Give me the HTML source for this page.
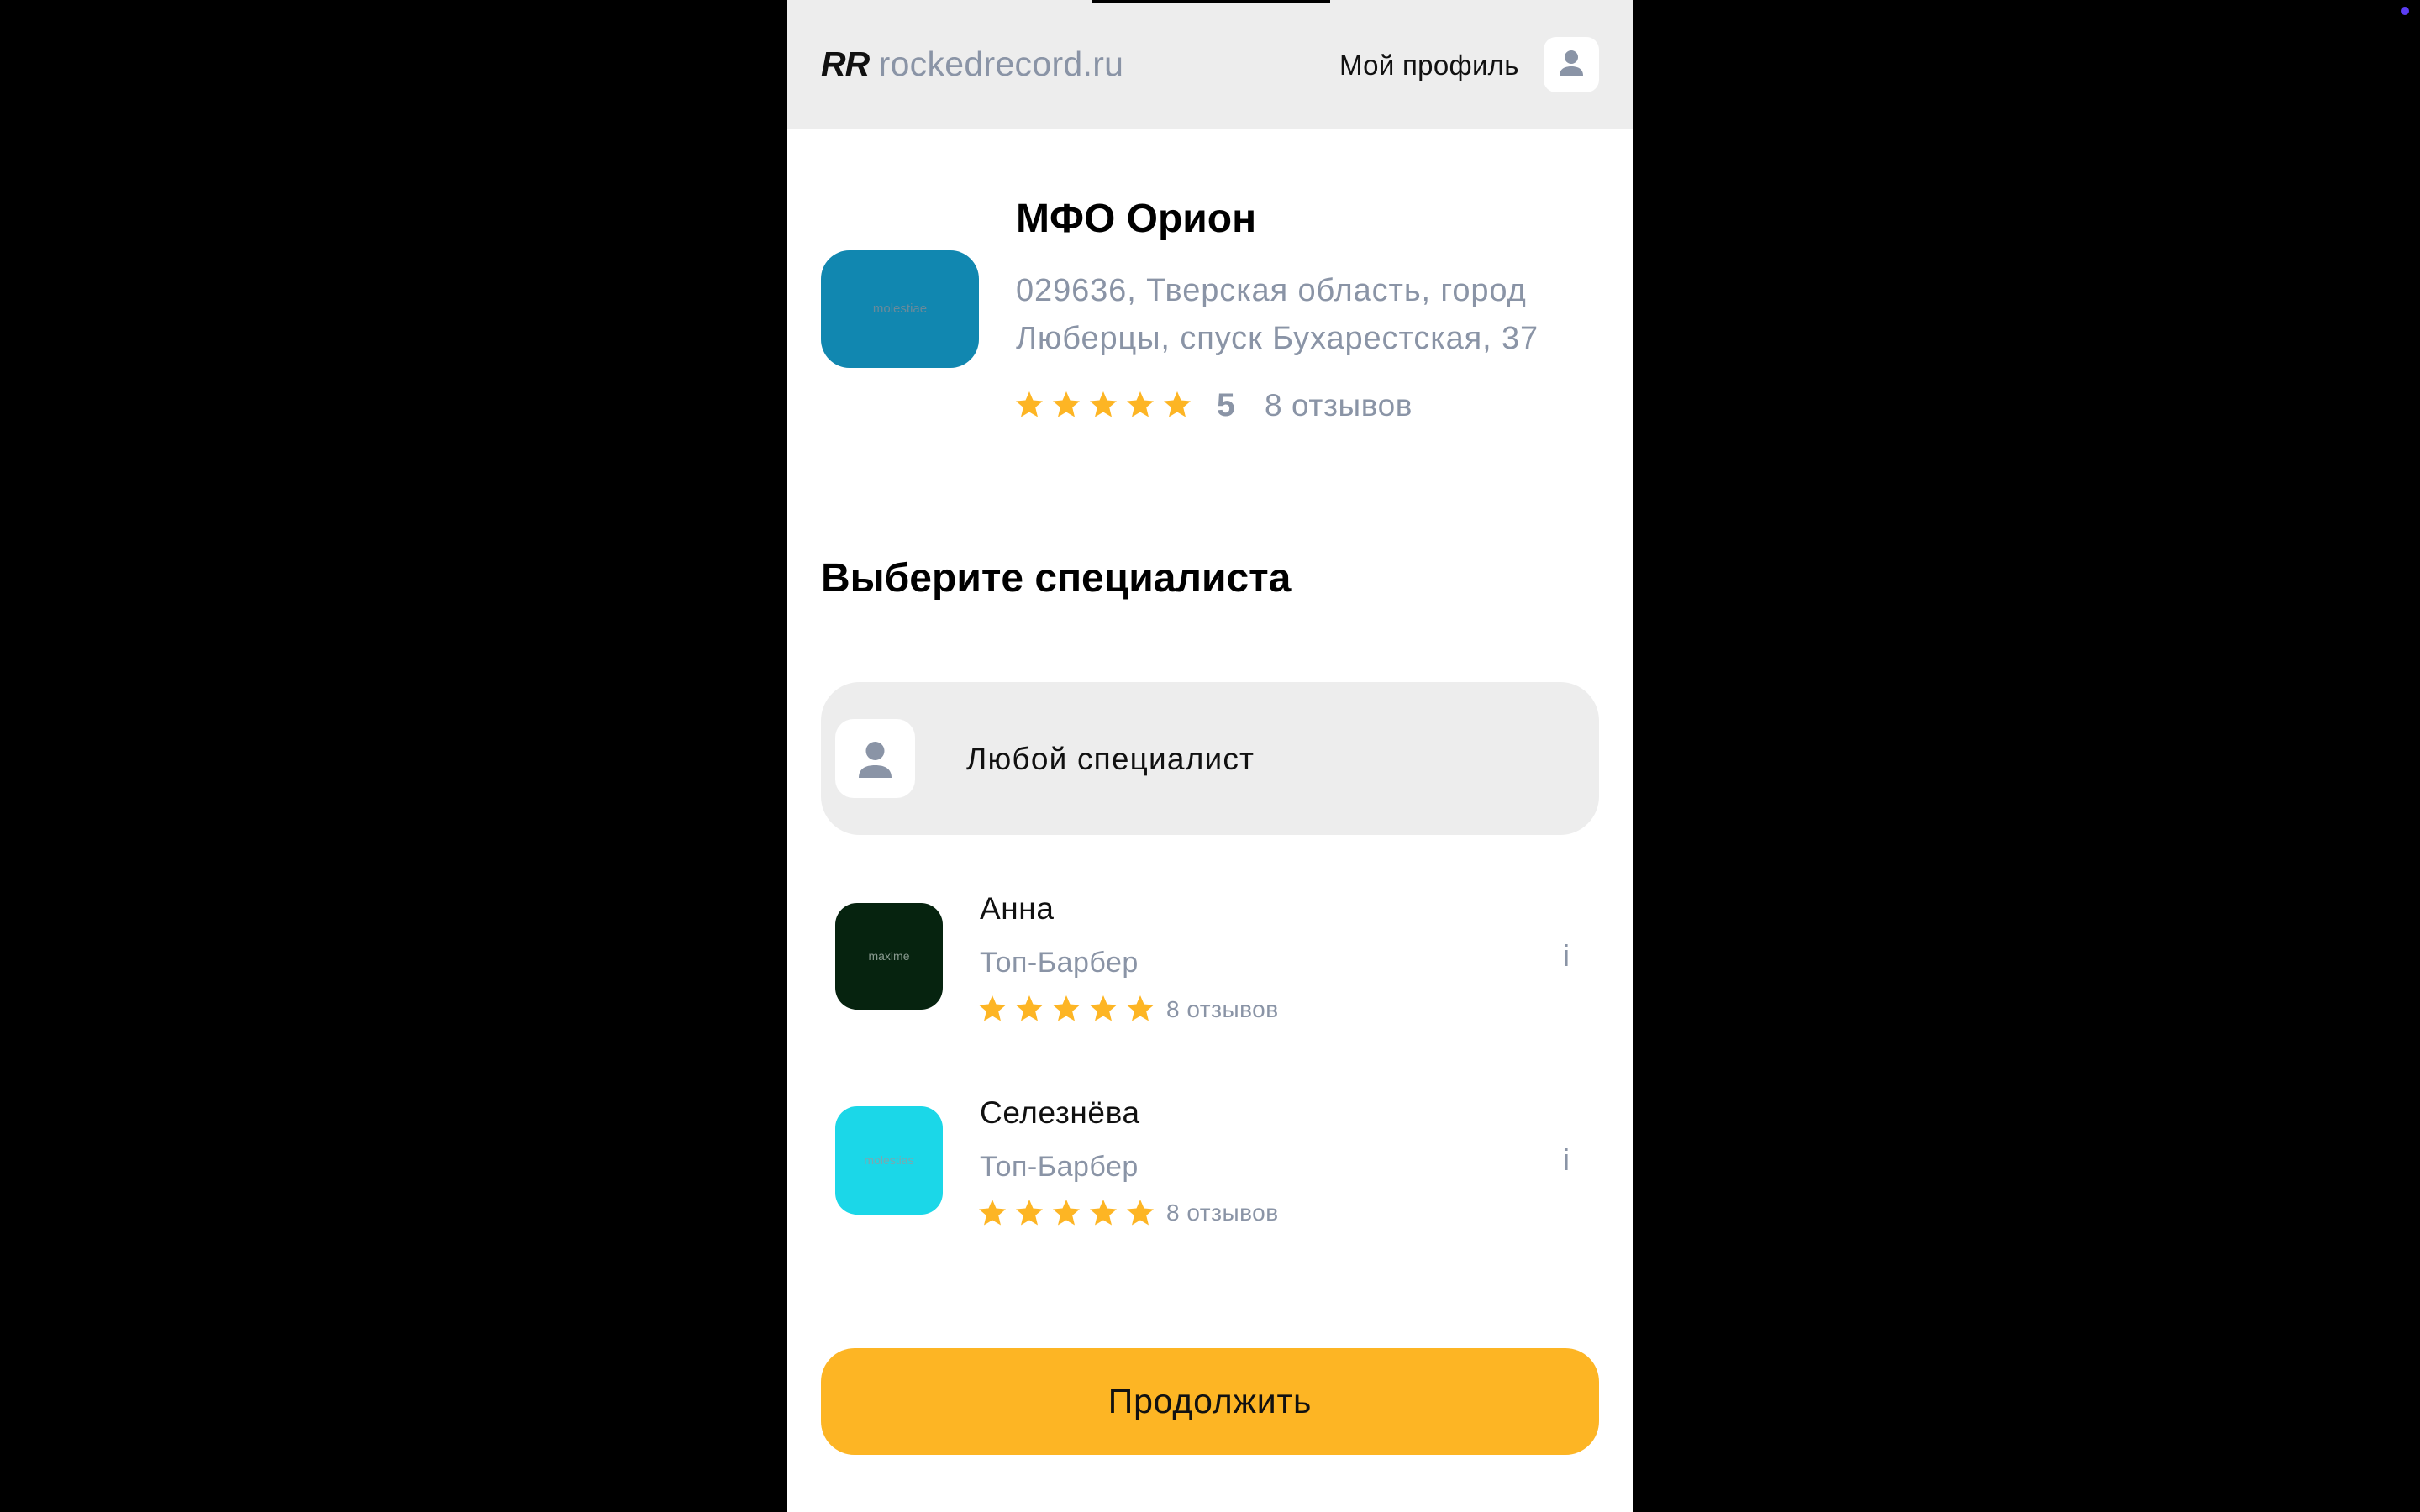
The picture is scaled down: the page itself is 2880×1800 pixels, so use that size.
<!DOCTYPE html>
<html><head><meta charset="utf-8"><style>
*{margin:0;padding:0;box-sizing:border-box}
body{width:2880px;height:1800px;background:#000;position:relative;overflow:hidden;font-family:"Liberation Sans","DejaVu Sans",sans-serif}
.a{position:absolute;white-space:nowrap}
.panel{position:absolute;left:937px;top:0;width:1006px;height:1800px;background:#fff}
.hdr{position:absolute;left:937px;top:0;width:1006px;height:154px;background:#ededed}
.g{color:#8a94a6}
</style></head><body>
<div class="panel"></div>
<div class="hdr"></div>
<div class="a" style="left:1299px;top:0;width:284px;height:3px;background:#000"></div>
<div class="a" style="left:2857px;top:8px;width:10px;height:10px;border-radius:50%;background:#5b3df5"></div>

<div class="a" style="left:977px;top:55px;font-size:41px;line-height:42px"><b style="font-style:italic;color:#111;letter-spacing:-1px">RR</b> <span class="g" style="letter-spacing:0.3px">rockedrecord.ru</span></div>
<div class="a" style="left:1594px;top:60px;font-size:33px;line-height:36px;color:#111;letter-spacing:0.3px">Мой профиль</div>
<div class="a" style="left:1837px;top:44px;width:66px;height:66px;background:#fff;border-radius:15px">
<svg width="66" height="66" viewBox="0 0 66 66"><circle cx="33" cy="24" r="8" fill="#8a94a6"/><path d="M19 46c0-8 6-11 14-11s14 3 14 11z" fill="#8a94a6"/></svg></div>

<div class="a" style="left:977px;top:298px;width:188px;height:140px;background:#1187b0;border-radius:34px;font-size:15px;color:#6a8a9a;text-align:center;line-height:140px">molestiae</div>
<div class="a" style="left:1209px;top:234px;font-size:48px;font-weight:bold;line-height:54px;color:#000">МФО Орион</div>
<div class="a g" style="left:1209px;top:318px;font-size:38px;line-height:57px;letter-spacing:0.9px">029636, Тверская область, город<br>Люберцы, спуск Бухарестская, 37</div>
<svg class="a" style="left:1208px;top:465px" width="220" height="36" viewBox="0 0 220 36">
<defs><polygon id="s" points="17,1 21.5,11.5 33,12.5 24.2,20 27,31.5 17,25.5 7,31.5 9.8,20 1,12.5 12.5,11.5" fill="#fdb524"/></defs>
<use href="#s" x="0"/><use href="#s" x="44"/><use href="#s" x="88"/><use href="#s" x="132"/><use href="#s" x="176"/></svg>
<div class="a g" style="left:1448px;top:462px;font-size:39px;font-weight:bold;line-height:42px">5</div>
<div class="a g" style="left:1505px;top:462px;font-size:37px;line-height:42px;letter-spacing:0.6px">8 отзывов</div>

<div class="a" style="left:977px;top:662px;font-size:48px;font-weight:bold;line-height:54px;color:#000">Выберите специалиста</div>

<div class="a" style="left:977px;top:812px;width:926px;height:182px;background:#ededed;border-radius:46px"></div>
<div class="a" style="left:994px;top:856px;width:95px;height:94px;background:#fff;border-radius:22px">
<svg width="95" height="94" viewBox="0 0 95 94"><circle cx="47.5" cy="38" r="11" fill="#8a94a6"/><path d="M28 70c0-11 8-15 19.5-15S67 59 67 70z" fill="#8a94a6"/></svg></div>
<div class="a" style="left:1150px;top:884px;font-size:37px;line-height:40px;color:#111;letter-spacing:1.2px">Любой специалист</div>

<div class="a" style="left:994px;top:1075px;width:128px;height:127px;background:#06230f;border-radius:26px;font-size:14px;color:#8a9a90;text-align:center;line-height:127px">maxime</div>
<div class="a" style="left:1166px;top:1062px;font-size:37px;line-height:40px;color:#111;letter-spacing:0.6px">Анна</div>
<div class="a g" style="left:1166px;top:1127px;font-size:34px;line-height:38px;letter-spacing:0.5px">Топ-Барбер</div>
<svg class="a" style="left:1164px;top:1184px" width="220" height="36" viewBox="0 0 220 36"><use href="#s" x="0"/><use href="#s" x="44"/><use href="#s" x="88"/><use href="#s" x="132"/><use href="#s" x="176"/></svg>
<div class="a g" style="left:1388px;top:1186px;font-size:28px;line-height:32px;letter-spacing:0.5px">8 отзывов</div>
<div class="a g" style="left:1860px;top:1118px;font-size:36px;line-height:40px">i</div>

<div class="a" style="left:994px;top:1317px;width:128px;height:129px;background:#1bd7e8;border-radius:26px;font-size:14px;color:#7aa8b0;text-align:center;line-height:129px">molestias</div>
<div class="a" style="left:1166px;top:1305px;font-size:37px;line-height:40px;color:#111;letter-spacing:0.6px">Селезнёва</div>
<div class="a g" style="left:1166px;top:1370px;font-size:34px;line-height:38px;letter-spacing:0.5px">Топ-Барбер</div>
<svg class="a" style="left:1164px;top:1427px" width="220" height="36" viewBox="0 0 220 36"><use href="#s" x="0"/><use href="#s" x="44"/><use href="#s" x="88"/><use href="#s" x="132"/><use href="#s" x="176"/></svg>
<div class="a g" style="left:1388px;top:1428px;font-size:28px;line-height:32px;letter-spacing:0.5px">8 отзывов</div>
<div class="a g" style="left:1860px;top:1361px;font-size:36px;line-height:40px">i</div>

<div class="a" style="left:977px;top:1605px;width:926px;height:127px;background:#fdb524;border-radius:40px;font-size:41px;line-height:127px;text-align:center;color:#111;letter-spacing:0.8px">Продолжить</div>
</body></html>
